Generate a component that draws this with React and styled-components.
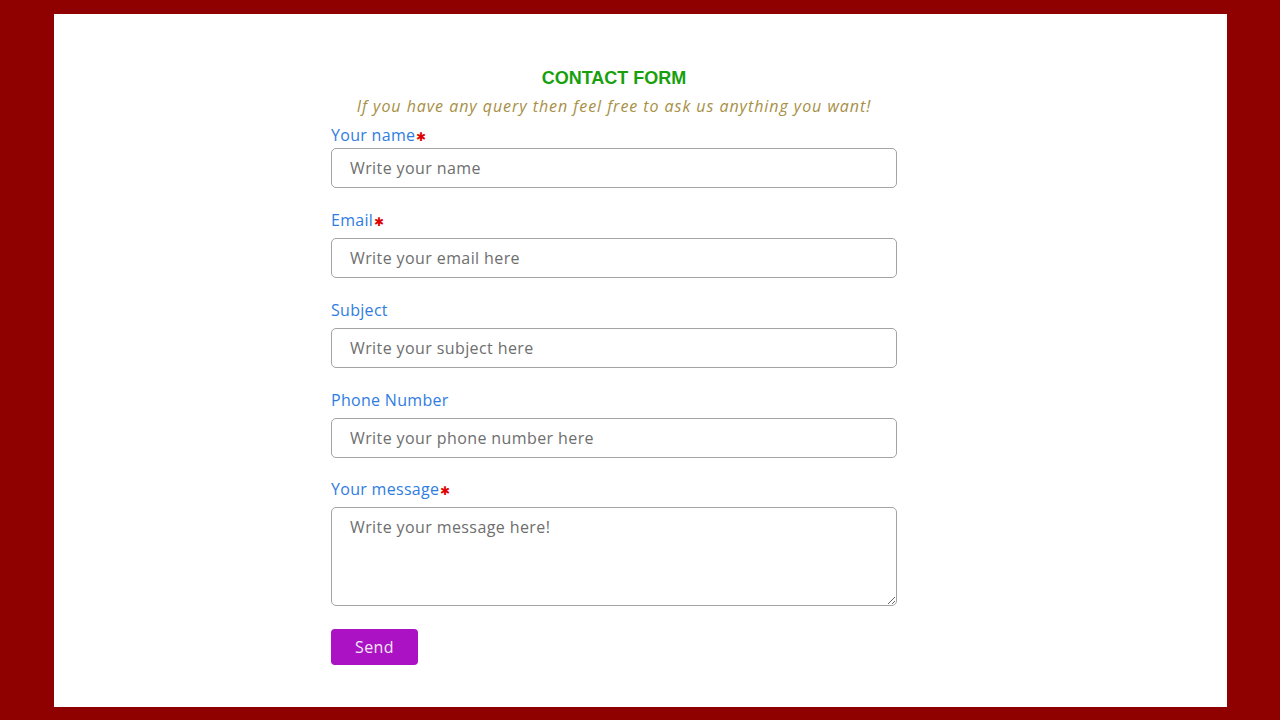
import React from "react"
import styled, { createGlobalStyle } from "styled-components"

const GlobalStyle = createGlobalStyle`
  html, body {
    margin: 0;
    padding: 0;
  }
  body {
    background-color: #8f0000;
    font-family: "Open Sans", "Noto Sans", sans-serif;
  }
`

const fields = [
  { label: "Your name", required: true, placeholder: "Write your name", top: 10, tight: true },
  { label: "Email", required: true, placeholder: "Write your email here", top: 23 },
  { label: "Subject", placeholder: "Write your subject here", top: 23 },
  { label: "Phone Number", placeholder: "Write your phone number here", top: 23 },
]

export default function App()
{
  return (<>
    <GlobalStyle />
    <Page>
      <Panel>
        <Form onSubmit={(e) => e.preventDefault()}>
          <Title>CONTACT FORM</Title>
          <Subtitle>If you have any query then feel free to ask us anything you want!</Subtitle>
          {
            fields.map((f) => (
              <Field key={f.label} $top={f.top}>
                <Label $tight={f.tight}>
                  {f.label}{f.required && <Star>✱</Star>}
                </Label>
                <Input type="text" placeholder={f.placeholder} />
              </Field>
            ))
          }
          <Field $top={22}>
            <Label>Your message<Star>✱</Star></Label>
            <TextArea placeholder="Write your message here!" />
          </Field>
          <SendButton type="submit">Send</SendButton>
        </Form>
      </Panel>
    </Page>
  </>)
}

const Page = styled.div`
  height: 720px;
  padding: 14px 53px 13px 54px;
  box-sizing: border-box;
  display: flex;
`

const Panel = styled.div`
  flex: 1;
  background-color: #ffffff;
  padding: 54px 0 0 277px;
  box-sizing: border-box;
`

const Form = styled.form`
  width: 566px;
  display: flex;
  flex-direction: column;
  align-items: flex-start;
`

const Title = styled.h2`
  align-self: stretch;
  text-align: center;
  margin: 0;
  font-family: "Liberation Sans", Arial, sans-serif;
  font-weight: 700;
  font-size: 18px;
  line-height: 21px;
  color: #17a00b;
`

const Subtitle = styled.p`
  align-self: stretch;
  text-align: center;
  margin: 7px 0 0;
  font-style: italic;
  font-size: 16px;
  letter-spacing: 0.95px;
  line-height: 20px;
  color: #a78f45;
`

const Field = styled.div`
  align-self: stretch;
  display: flex;
  flex-direction: column;
  margin-top: ${(p) => p.$top}px;
`

const Label = styled.label`
  display: block;
  height: 19px;
  font-size: 16px;
  letter-spacing: 0.3px;
  line-height: 19px;
  color: #2f7de1;
  margin-bottom: ${(p) => (p.$tight ? "3px" : "8px")};
`

const Star = styled.span`
  color: #e00000;
  font-size: 12px;
  line-height: 1;
  margin-left: 1px;
  letter-spacing: 0;
`

const Input = styled.input`
  height: 40px;
  box-sizing: border-box;
  border: 1px solid #a3a3a3;
  border-radius: 5px;
  padding: 0 18px;
  font-family: inherit;
  font-size: 16px;
  letter-spacing: 0.4px;
  color: #333;
  outline: none;
  &::placeholder {
    color: #6e6e6e;
  }
`

const TextArea = styled.textarea`
  height: 99px;
  box-sizing: border-box;
  border: 1px solid #a3a3a3;
  border-radius: 5px;
  padding: 9px 18px;
  font-family: inherit;
  font-size: 16px;
  letter-spacing: 0.4px;
  line-height: 20px;
  color: #333;
  outline: none;
  resize: vertical;
  &::placeholder {
    color: #6e6e6e;
  }
`

const SendButton = styled.button`
  margin-top: 23px;
  width: 87px;
  height: 36px;
  border: none;
  border-radius: 4px;
  background-color: #aa12c4;
  color: #f3e6f7;
  font-family: inherit;
  font-size: 16px;
  letter-spacing: 0.4px;
  cursor: pointer;
`
